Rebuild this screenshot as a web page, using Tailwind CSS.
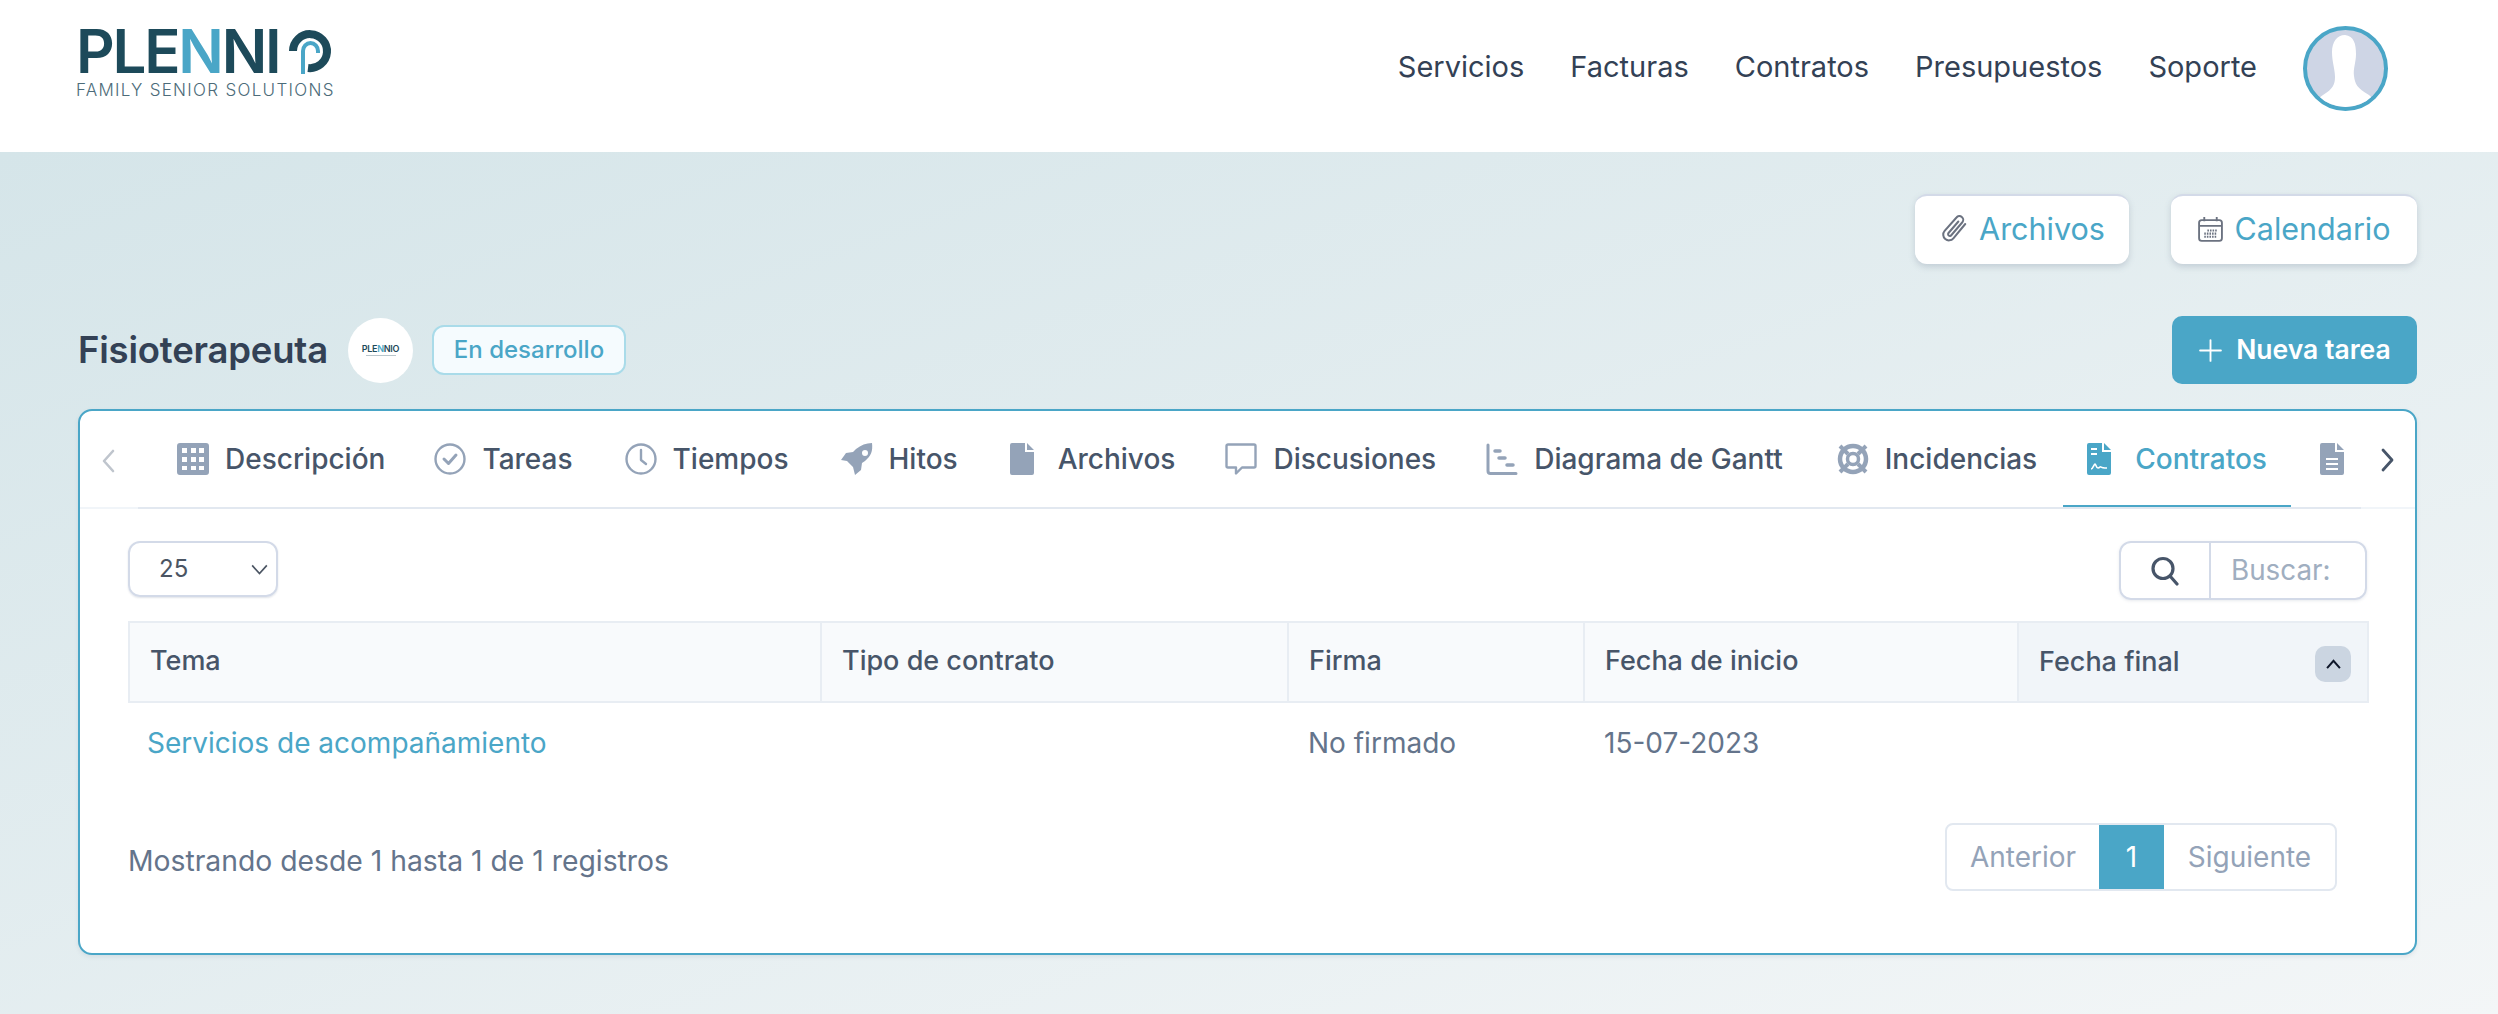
<!DOCTYPE html>
<html lang="es">
<head>
    <meta charset="utf-8">
    <meta name="viewport" content="width=device-width, initial-scale=1.0">
    <title>Plennio - Fisioterapeuta</title>
    <script src="https://cdn.jsdelivr.net/npm/@tailwindcss/browser@4"></script>
</head>
<body class="font-['Inter',sans-serif] bg-white text-[#334155]">

    <!-- cabecera -->
    <header class="h-[152px] bg-white flex items-center justify-between pl-[76px] pr-[110px] pb-[16px]">
        <div class="w-[260px] -mt-[10px]">
            <div class="flex items-center h-[46px]">
                <span class="font-['Inter',sans-serif] font-semibold text-[60px] leading-[46px] tracking-[-2.200px] text-[#1d4a5a]">PLE<span class="text-[#4aa6c7]">N</span>NI</span>
                <svg viewBox="0 0 44 46" class="w-[44px] h-[46px] ml-[8px]" fill="none">
                    <path d="M5 23A17 17 0 1 1 20 40" stroke="#1d4a5a" stroke-width="8"/>
                    <path d="M15 46V23A7.500 8 0 0 1 30 23V25" stroke="#4aa6c7" stroke-width="4"/>
                </svg>
            </div>
            <div class="mt-[8px] text-[17px] leading-[16px] font-light tracking-[1.300px] text-[#4c6b79] whitespace-nowrap">FAMILY SENIOR SOLUTIONS</div>
        </div>
        <nav class="flex items-center text-[29px] text-[#334155]">
            <a href="#" class="mr-[46px] mb-[3px]">Servicios</a>
            <a href="#" class="mr-[46px] mb-[3px]">Facturas</a>
            <a href="#" class="mr-[46px] mb-[3px]">Contratos</a>
            <a href="#" class="mr-[46px] mb-[3px]">Presupuestos</a>
            <a href="#" class="mr-[46px] mb-[3px]">Soporte</a>
            <div class="w-[85px] h-[85px] rounded-full border-[4px] border-[#4aa6c7] bg-[#ced5e5] overflow-hidden">
                <svg viewBox="0 0 77 77" class="w-full h-full">
                    <path d="M38 5 C47 6 49 14 49 24 C49 33 46 38 47 46 C48 54 50 58 62 65 C66 68 68 72 68 77 H9 C9 72 11 68 16 65 C26 59 28 54 28 47 C28 39 25 32 25 22 C25 12 30 5 38 5 Z" fill="#fff"/>
                </svg>
            </div>
        </nav>
    </header>

    <main class="min-h-[862px] bg-linear-to-br from-[#d5e5e9] to-[#f3f6f7] pl-[78px] pr-[81px] pt-[42px]">
        <!-- botones -->
        <div class="flex justify-end gap-[42px]">
            <button class="h-[70px] w-[214px] pb-[2px] flex items-center justify-center gap-[10px] bg-white rounded-[12px] border-t-2 border-[#d3dae8] shadow-[0_3px_6px_rgba(100,116,139,0.25)] text-[30.500px] text-[#4aa6c7]">
                <svg viewBox="0 0 24 24" class="w-[30px] h-[30px]" fill="none" stroke="#6b7280" stroke-width="1.600" stroke-linecap="round" stroke-linejoin="round"><path d="M21 8 11.500 19.500a4.600 4.600 0 0 1-7-6L14 2.800a3 3 0 0 1 4.700 3.800L9.800 17a1.400 1.400 0 0 1-2.200-1.800L15.500 6"/></svg>
                Archivos
            </button>
            <button class="h-[70px] w-[246px] pb-[2px] flex items-center justify-center gap-[10px] bg-white rounded-[12px] border-t-2 border-[#d3dae8] shadow-[0_3px_6px_rgba(100,116,139,0.25)] text-[30.500px] text-[#4aa6c7]">
                <svg viewBox="0 0 26 26" class="w-[27px] h-[27px]" fill="none" stroke="#6b7280" stroke-width="1.800"><rect x="2" y="4" width="22" height="20" rx="2.500"/><path d="M2 9.500H24M7 1V5M19 1V5"/><path d="M10 14h9M7 17h12M7 20h12" stroke-width="2" stroke-dasharray="1.500 1"/></svg>
                Calendario
            </button>
        </div>

        <!-- titulo -->
        <div class="flex items-center mt-[52px] h-[68px]">
            <h1 class="text-[36.500px] font-semibold text-[#334155] tracking-[-0.2px]">Fisioterapeuta</h1>
            <div class="ml-[20px] w-[65px] h-[65px] rounded-full bg-white flex flex-col items-center justify-center">
                <span class="text-[9px] leading-[9px] font-semibold text-[#1d4a5a] tracking-[-0.3px]">PLE<span class="text-[#4aa6c7]">N</span>NI<span class="text-[#1d4a5a]">O</span></span>
                <span class="block w-[30px] h-[1px] mt-[2px] bg-[#b9c6cc]"></span>
            </div>
            <span class="ml-[19px] h-[50px] w-[194px] flex items-center justify-center rounded-[12px] border-2 border-[#a9dbe9] bg-[#f5fbfe] text-[24px] font-medium text-[#4aa6c7]">En desarrollo</span>
            <button class="ml-auto h-[68px] w-[245px] flex items-center justify-center gap-[13px] rounded-[10px] bg-[#4aa6c7] text-white text-[26.500px] font-semibold">
                <svg viewBox="0 0 24 24" class="w-[25px] h-[25px]" fill="none" stroke="#fff" stroke-width="1.800" stroke-linecap="round"><path d="M12 2v20M2 12h20"/></svg>
                Nueva tarea
            </button>
        </div>

        <!-- tarjeta -->
        <section class="mt-[25px] h-[546px] bg-white rounded-[14px] border-2 border-[#4aa6c7] shadow-[0_2px_4px_rgba(100,116,139,0.12)] overflow-hidden">
            <div class="relative h-[98px] border-b-2 border-[#f1f5f9]">
                <svg viewBox="0 0 16 26" class="absolute left-[20px] top-[37px] w-[16px] h-[26px]" fill="none" stroke="#bfc5cd" stroke-width="2.600" stroke-linecap="round" stroke-linejoin="round"><path d="M13 3 4 13l9 10"/></svg>
                <div class="absolute left-[58px] top-0 w-[2223px] h-[98px] overflow-hidden border-b-2 border-[#e2e8f0]">
                    <ul class="flex h-[96px] text-[28px] font-medium text-[#475569] whitespace-nowrap pl-[13px]">
                        <li class="flex items-center gap-[16px] pl-[26px] pr-[23px]">
                            <svg viewBox="0 0 32 32" class="w-[32px] h-[32px]"><path fill="#94a3b8" fill-rule="evenodd" d="M3 0h26a3 3 0 0 1 3 3v26a3 3 0 0 1-3 3H3a3 3 0 0 1-3-3V3a3 3 0 0 1 3-3Zm2 5v5h5V5Zm9 0v5h5V5Zm8 0v5h5V5ZM5 14v5h5v-5Zm9 0v5h5v-5Zm8 0v5h5v-5ZM5 23v4h5v-4Zm9 0v4h5v-4Zm8 0v4h5v-4Z"/></svg>
                            Descripción
                        </li>
                        <li class="flex items-center gap-[16px] px-[26px]">
                            <svg viewBox="0 0 32 32" class="w-[32px] h-[32px]" fill="none" stroke="#94a3b8" stroke-width="2.400" stroke-linecap="round" stroke-linejoin="round"><circle cx="16" cy="16" r="14.500"/><path d="m10 16 4.500 4.500L22 12" stroke-width="3"/></svg>
                            Tareas
                        </li>
                        <li class="flex items-center gap-[16px] px-[26px]">
                            <svg viewBox="0 0 32 32" class="w-[32px] h-[32px]" fill="none" stroke="#94a3b8" stroke-width="2.400" stroke-linecap="round" stroke-linejoin="round"><circle cx="16" cy="16" r="14.500"/><path d="M16 7v10l5 4"/></svg>
                            Tiempos
                        </li>
                        <li class="flex items-center gap-[16px] px-[26px]">
                            <svg viewBox="0 0 32 32" class="w-[32px] h-[32px]"><path fill="#94a3b8" fill-rule="evenodd" d="M31 0c1 8-1 13-7 18l-3 2-1 7-6 5-2-8-6-6-6-1 5-7 7-1 3-3C20 2 25 0 31 0Zm-7 7a3 3 0 1 0 0 6 3 3 0 0 0 0-6Z"/></svg>
                            Hitos
                        </li>
                        <li class="flex items-center gap-[24px] pl-[26px] pr-[24px]">
                            <svg viewBox="0 0 24 32" class="w-[24px] h-[32px]"><path fill="#94a3b8" d="M2 0h13v9h9v21a2 2 0 0 1-2 2H2a2 2 0 0 1-2-2V2a2 2 0 0 1 2-2Zm15 0 7 7h-7Z"/></svg>
                            Archivos
                        </li>
                        <li class="flex items-center gap-[16px] pl-[26px] pr-[24px]">
                            <svg viewBox="0 0 32 32" class="w-[32px] h-[32px]" fill="none" stroke="#94a3b8" stroke-width="2.400" stroke-linejoin="round"><path d="M3 1.500h26a1.500 1.500 0 0 1 1.500 1.500v20a1.500 1.500 0 0 1-1.500 1.500H17l-6 6v-6H3A1.500 1.500 0 0 1 1.500 23V3A1.500 1.500 0 0 1 3 1.500Z"/></svg>
                            Discusiones
                        </li>
                        <li class="flex items-center gap-[16px] pl-[26px] pr-[28px]">
                            <svg viewBox="0 0 32 32" class="w-[32px] h-[32px]" fill="none" stroke="#94a3b8" stroke-linecap="round"><path d="M2 2v26a2.500 2.500 0 0 0 2.500 2.500H30" stroke-width="3"/><path d="M9 8h5M13 15h6M21 22h6" stroke-width="3.500"/></svg>
                            Diagrama de Gantt
                        </li>
                        <li class="flex items-center gap-[16px] px-[26px]">
                            <svg viewBox="0 0 32 32" class="w-[32px] h-[32px]" fill="none" stroke="#94a3b8"><circle cx="16" cy="16" r="13" stroke-width="4.500"/><circle cx="16" cy="16" r="5.500" stroke-width="3.500"/><path d="m3 3 8 8m18-8-8 8M3 29l8-8m18 8-8-8" stroke-width="4"/></svg>
                            Incidencias
                        </li>
                        <li class="relative flex items-center gap-[24px] px-[24px] text-[#4aa6c7]">
                            <svg viewBox="0 0 24 32" class="w-[24px] h-[32px]"><path fill="#4aa6c7" fill-rule="evenodd" d="M2 0h13v9h9v21a2 2 0 0 1-2 2H2a2 2 0 0 1-2-2V2a2 2 0 0 1 2-2Zm2 5v2h6V5Zm0 5v2h6v-2Z"/><path fill="#4aa6c7" d="m17 0 7 7h-7Z"/><path fill="none" stroke="#fff" stroke-width="1.600" d="M4 26c2 0 3-5 4-5s1 4 3 4 2-2 3-1 3 1 6 1"/></svg>
                            Contratos
                            <span class="absolute left-0 right-0 bottom-[-2px] h-[4px] bg-[#4aa6c7]"></span>
                        </li>
                        <li class="flex items-center gap-[24px] px-[29px]">
                            <svg viewBox="0 0 24 32" class="w-[24px] h-[32px]"><path fill="#94a3b8" d="M2 0h13v9h9v21a2 2 0 0 1-2 2H2a2 2 0 0 1-2-2V2a2 2 0 0 1 2-2Zm15 0 7 7h-7Z"/><path stroke="#fff" stroke-width="2" d="M6 16h12M6 21h12M6 26h12"/></svg>
                        </li>
                    </ul>
                </div>
                <svg viewBox="0 0 16 26" class="absolute left-[2300px] top-[36px] w-[16px] h-[26px]" fill="none" stroke="#475569" stroke-width="2.800" stroke-linecap="round" stroke-linejoin="round"><path d="m3 3 9 10-9 10"/></svg>
            </div>

            <div class="px-[48px]">
                <!-- controles -->
                <div class="flex items-start justify-between mt-[32px]">
                    <div class="w-[150px] h-[56px] flex items-center justify-between pl-[29px] pr-[8px] rounded-[12px] border-2 border-[#d3dae8] shadow-[0_1px_2px_rgba(100,116,139,0.2)] text-[24px] text-[#4b5563]">
                        25
                        <svg viewBox="0 0 18 12" class="w-[17px] h-[11px]" fill="none" stroke="#4b5563" stroke-width="1.800"><path d="m1 1.500 8 9 8-9"/></svg>
                    </div>
                    <div class="w-[248px] h-[59px] flex rounded-[12px] border-2 border-[#d3dae8] shadow-[0_1px_3px_rgba(100,116,139,0.15)]">
                        <div class="w-[90px] flex items-center justify-center border-r-2 border-[#d3dae8]">
                            <svg viewBox="0 0 30 30" class="w-[30px] h-[30px]" fill="none" stroke="#475569" stroke-width="3.200" stroke-linecap="round"><circle cx="13" cy="12.500" r="10"/><path d="m20 20 7 8"/></svg>
                        </div>
                        <div class="flex-1 pl-[20px] flex items-center text-[27.800px] text-[#a0aec0]">Buscar:</div>
                    </div>
                </div>

                <!-- tabla -->
                <table class="w-[2239px] mt-[21px] table-fixed border-collapse text-[27px]">
                    <colgroup>
                        <col class="w-[692px]">
                        <col class="w-[467px]">
                        <col class="w-[296px]">
                        <col class="w-[434px]">
                        <col class="w-[350px]">
                    </colgroup>
                    <thead>
                        <tr class="h-[80px] bg-[#f8fafc] text-left text-[#475569]">
                            <th class="border-2 border-[#e8edf3] pl-[20px] pb-[2px] font-medium">Tema</th>
                            <th class="border-2 border-[#e8edf3] pl-[20px] pb-[2px] font-medium">Tipo de contrato</th>
                            <th class="border-2 border-[#e8edf3] pl-[20px] pb-[2px] font-medium">Firma</th>
                            <th class="border-2 border-[#e8edf3] pl-[20px] pb-[2px] font-medium">Fecha de inicio</th>
                            <th class="border-2 border-[#e8edf3] pl-[20px] bg-[#f1f5f9] font-medium">
                                <div class="flex items-center justify-between pr-[16px]">
                                    Fecha final
                                    <span class="w-[36px] h-[36px] mt-[4px] rounded-[10px] bg-[#cbd5e1] flex items-center justify-center">
                                        <svg viewBox="0 0 18 12" class="w-[17px] h-[11px]" fill="none" stroke="#0f172a" stroke-width="2.200"><path d="m2 10 7-8 7 8"/></svg>
                                    </span>
                                </div>
                            </th>
                        </tr>
                    </thead>
                    <tbody>
                        <tr class="h-[80px] text-[28px] text-[#64748b]">
                            <td class="pl-[18px]"><a href="#" class="text-[#4aa6c7]">Servicios de acompañamiento</a></td>
                            <td></td>
                            <td class="pl-[20px]">No firmado</td>
                            <td class="pl-[20px]">15-07-2023</td>
                            <td></td>
                        </tr>
                    </tbody>
                </table>

                <!-- pie -->
                <div class="flex items-center justify-between mt-[41px]">
                    <p class="mt-[8px] text-[28.300px] text-[#64748b]">Mostrando desde 1 hasta 1 de 1 registros</p>
                    <div class="mr-[30px] h-[68px] w-[392px] flex rounded-[8px] border-2 border-[#e2e8f0] text-[28px] text-[#94a3b8] overflow-hidden">
                        <a href="#" class="w-[152px] flex items-center justify-center">Anterior</a>
                        <a href="#" class="w-[65px] -my-[2px] flex items-center justify-center bg-[#4aa6c7] text-white">1</a>
                        <a href="#" class="flex-1 flex items-center justify-center">Siguiente</a>
                    </div>
                </div>
            </div>
        </section>
    </main>

</body>
</html>
